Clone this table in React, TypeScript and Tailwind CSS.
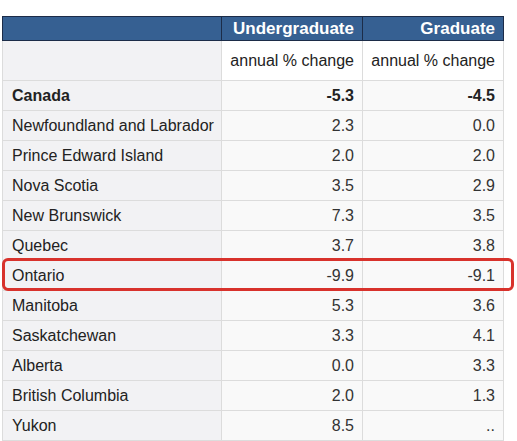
const rows: [string, string, string, boolean?][] = [
  ["Canada", "-5.3", "-4.5", true],
  ["Newfoundland and Labrador", "2.3", "0.0"],
  ["Prince Edward Island", "2.0", "2.0"],
  ["Nova Scotia", "3.5", "2.9"],
  ["New Brunswick", "7.3", "3.5"],
  ["Quebec", "3.7", "3.8"],
  ["Ontario", "-9.9", "-9.1"],
  ["Manitoba", "5.3", "3.6"],
  ["Saskatchewan", "3.3", "4.1"],
  ["Alberta", "0.0", "3.3"],
  ["British Columbia", "2.0", "1.3"],
  ["Yukon", "8.5", ".."],
];

export default function App() {
  return (
    <div className="w-[517px] h-[441px] overflow-hidden bg-white pt-[16px] pl-[2px] text-[16px] text-[#222] font-['Liberation_Sans',Arial,sans-serif]">
      <div className="relative w-[501px]">
        <table className="w-[501px] border-collapse table-fixed">
          <colgroup>
            <col className="w-[219px]" />
            <col className="w-[141px]" />
            <col className="w-[141px]" />
          </colgroup>
          <thead>
            <tr className="h-[24px] bg-[#366092] text-white font-bold text-[17px] leading-[20px]">
              <th className="border border-[#1c2c48]" />
              <th className="border border-[#1c2c48] text-right pr-[8px]">Undergraduate</th>
              <th className="border border-[#1c2c48] text-right pr-[8px]">Graduate</th>
            </tr>
          </thead>
          <tbody>
            <tr className="h-[40px]">
              <td className="border border-[#dcdcdc] bg-[#f2f2f4]" />
              <td className="border border-[#dcdcdc] bg-white text-right pr-[8px]">annual % change</td>
              <td className="border border-[#dcdcdc] bg-white text-right pr-[8px]">annual % change</td>
            </tr>
            {rows.map(([name, a, b, bold]) => (
              <tr key={name} className={`h-[30px] ${bold ? "font-bold" : ""}`}>
                <td className="border border-[#dcdcdc] bg-[#f2f2f4] pl-[9px]">{name}</td>
                <td className={`border border-[#dcdcdc] bg-[#f9f9f9] text-right pr-[8px] ${bold ? "" : "text-[#333]"}`}>{a}</td>
                <td className={`border border-[#dcdcdc] bg-[#f9f9f9] text-right pr-[8px] ${bold ? "" : "text-[#333]"}`}>{b}</td>
              </tr>
            ))}
          </tbody>
        </table>
        <div className="absolute left-[0px] top-[242px] w-[512px] h-[33px] rounded-[6px] border-[3px] border-[#d8322c]" />
      </div>
    </div>
  );
}
